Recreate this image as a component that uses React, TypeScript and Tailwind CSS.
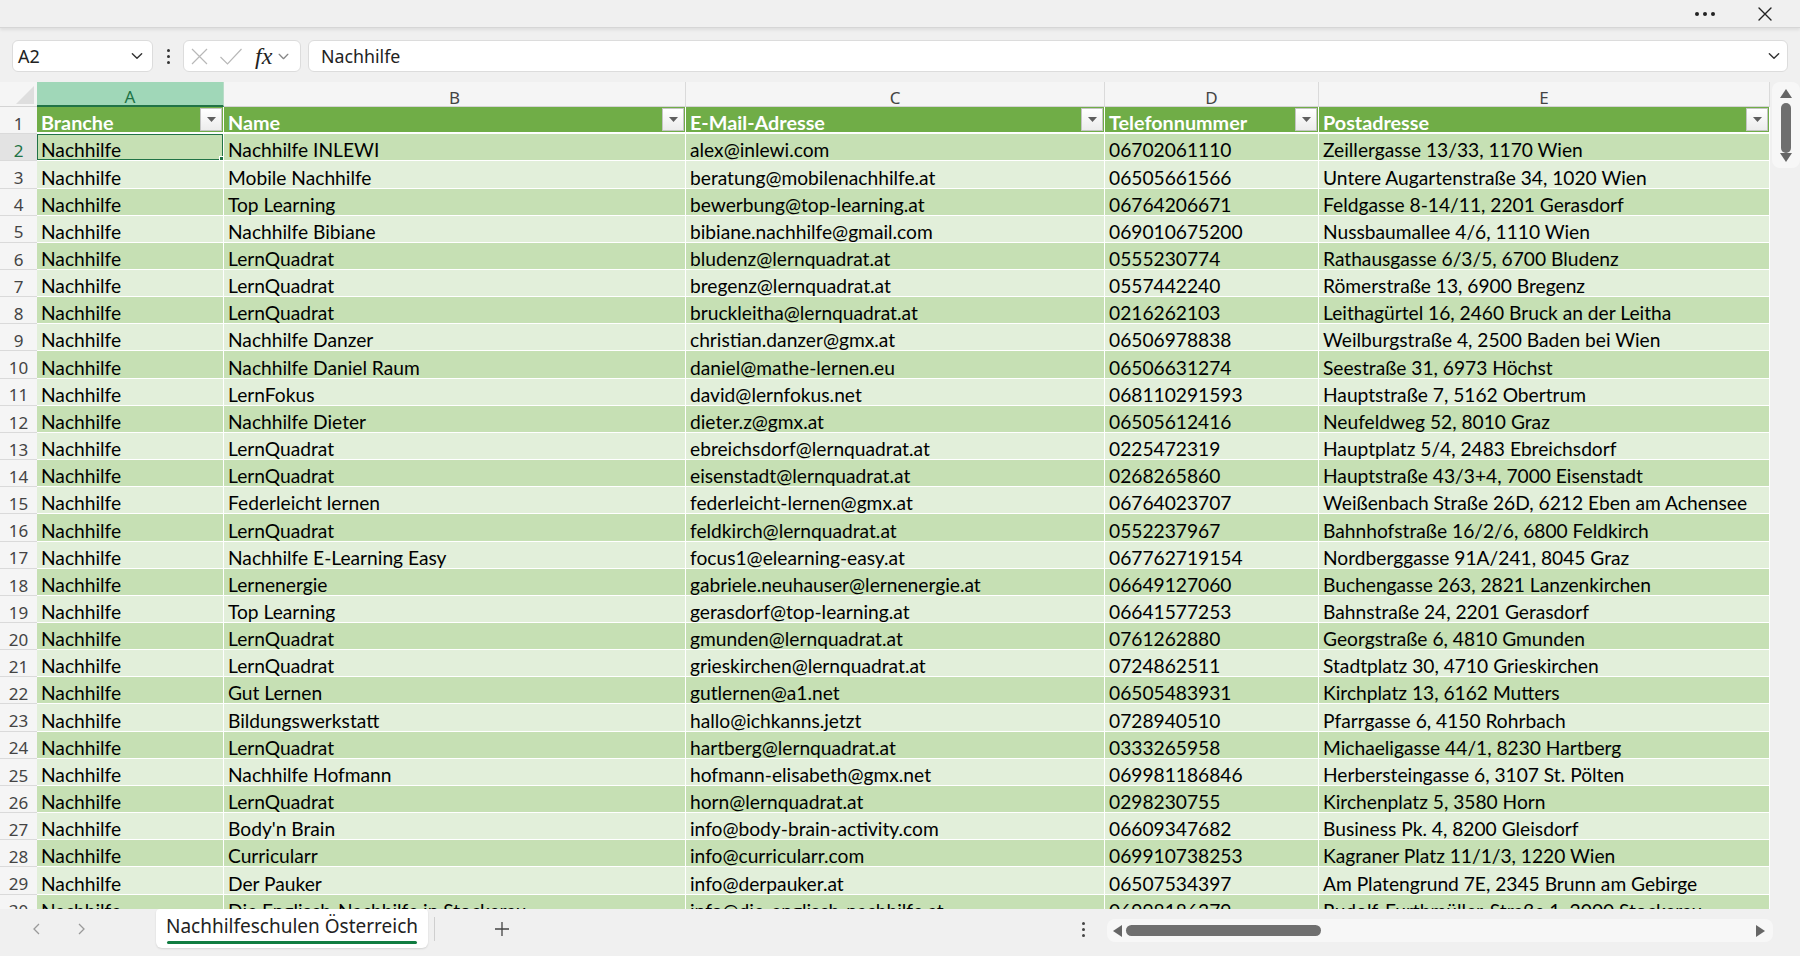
import React from "react";

type Row = [string, string, string, string, string];

const rows: Row[] = [
  ["Nachhilfe", "Nachhilfe INLEWI", "alex@inlewi.com", "06702061110", "Zeillergasse 13/33, 1170 Wien"],
  ["Nachhilfe", "Mobile Nachhilfe", "beratung@mobilenachhilfe.at", "06505661566", "Untere Augartenstraße 34, 1020 Wien"],
  ["Nachhilfe", "Top Learning", "bewerbung@top-learning.at", "06764206671", "Feldgasse 8-14/11, 2201 Gerasdorf"],
  ["Nachhilfe", "Nachhilfe Bibiane", "bibiane.nachhilfe@gmail.com", "069010675200", "Nussbaumallee 4/6, 1110 Wien"],
  ["Nachhilfe", "LernQuadrat", "bludenz@lernquadrat.at", "0555230774", "Rathausgasse 6/3/5, 6700 Bludenz"],
  ["Nachhilfe", "LernQuadrat", "bregenz@lernquadrat.at", "0557442240", "Römerstraße 13, 6900 Bregenz"],
  ["Nachhilfe", "LernQuadrat", "bruckleitha@lernquadrat.at", "0216262103", "Leithagürtel 16, 2460 Bruck an der Leitha"],
  ["Nachhilfe", "Nachhilfe Danzer", "christian.danzer@gmx.at", "06506978838", "Weilburgstraße 4, 2500 Baden bei Wien"],
  ["Nachhilfe", "Nachhilfe Daniel Raum", "daniel@mathe-lernen.eu", "06506631274", "Seestraße 31, 6973 Höchst"],
  ["Nachhilfe", "LernFokus", "david@lernfokus.net", "068110291593", "Hauptstraße 7, 5162 Obertrum"],
  ["Nachhilfe", "Nachhilfe Dieter", "dieter.z@gmx.at", "06505612416", "Neufeldweg 52, 8010 Graz"],
  ["Nachhilfe", "LernQuadrat", "ebreichsdorf@lernquadrat.at", "0225472319", "Hauptplatz 5/4, 2483 Ebreichsdorf"],
  ["Nachhilfe", "LernQuadrat", "eisenstadt@lernquadrat.at", "0268265860", "Hauptstraße 43/3+4, 7000 Eisenstadt"],
  ["Nachhilfe", "Federleicht lernen", "federleicht-lernen@gmx.at", "06764023707", "Weißenbach Straße 26D, 6212 Eben am Achensee"],
  ["Nachhilfe", "LernQuadrat", "feldkirch@lernquadrat.at", "0552237967", "Bahnhofstraße 16/2/6, 6800 Feldkirch"],
  ["Nachhilfe", "Nachhilfe E-Learning Easy", "focus1@elearning-easy.at", "067762719154", "Nordberggasse 91A/241, 8045 Graz"],
  ["Nachhilfe", "Lernenergie", "gabriele.neuhauser@lernenergie.at", "06649127060", "Buchengasse 263, 2821 Lanzenkirchen"],
  ["Nachhilfe", "Top Learning", "gerasdorf@top-learning.at", "06641577253", "Bahnstraße 24, 2201 Gerasdorf"],
  ["Nachhilfe", "LernQuadrat", "gmunden@lernquadrat.at", "0761262880", "Georgstraße 6, 4810 Gmunden"],
  ["Nachhilfe", "LernQuadrat", "grieskirchen@lernquadrat.at", "0724862511", "Stadtplatz 30, 4710 Grieskirchen"],
  ["Nachhilfe", "Gut Lernen", "gutlernen@a1.net", "06505483931", "Kirchplatz 13, 6162 Mutters"],
  ["Nachhilfe", "Bildungswerkstatt", "hallo@ichkanns.jetzt", "0728940510", "Pfarrgasse 6, 4150 Rohrbach"],
  ["Nachhilfe", "LernQuadrat", "hartberg@lernquadrat.at", "0333265958", "Michaeligasse 44/1, 8230 Hartberg"],
  ["Nachhilfe", "Nachhilfe Hofmann", "hofmann-elisabeth@gmx.net", "069981186846", "Herbersteingasse 6, 3107 St. Pölten"],
  ["Nachhilfe", "LernQuadrat", "horn@lernquadrat.at", "0298230755", "Kirchenplatz 5, 3580 Horn"],
  ["Nachhilfe", "Body'n Brain", "info@body-brain-activity.com", "06609347682", "Business Pk. 4, 8200 Gleisdorf"],
  ["Nachhilfe", "Curricularr", "info@curricularr.com", "069910738253", "Kagraner Platz 11/1/3, 1220 Wien"],
  ["Nachhilfe", "Der Pauker", "info@derpauker.at", "06507534397", "Am Platengrund 7E, 2345 Brunn am Gebirge"],
  ["Nachhilfe", "Die Englisch-Nachhilfe in Stockerau", "info@die-englisch-nachhilfe.at", "06998186379", "Rudolf-Furthmüller-Straße 1, 2000 Stockerau"],
];

const headers = ["Branche", "Name", "E-Mail-Adresse", "Telefonnummer", "Postadresse"];
const letters = ["A", "B", "C", "D", "E"];
const colW = ["w-[187px]", "w-[462px]", "w-[419px]", "w-[214px]", "w-[451px]"];

const cellFont = "font-['Lato','Liberation_Sans',sans-serif] text-[19.2px]";
const uiFont = "font-['Noto_Sans','Open_Sans',sans-serif]";

function FilterButton() {
  return (
    <div className="mr-[1px] flex h-[23px] w-[22px] shrink-0 items-center justify-center border border-[#c4c4c4] bg-gradient-to-b from-white to-[#ececec]">
      <svg width="9" height="5" viewBox="0 0 9 5">
        <path d="M0 0h9L4.5 5z" fill="#5f5f5f" />
      </svg>
    </div>
  );
}

function Chevron({ size = 12, color = "#333" }: { size?: number; color?: string }) {
  return (
    <svg width={size} height={size} viewBox="0 0 12 12" fill="none">
      <path d="M2 4l4 4 4-4" stroke={color} strokeWidth="1.2" strokeLinecap="round" strokeLinejoin="round" />
    </svg>
  );
}

function TitleBar() {
  return (
    <div className="flex h-[28px] shrink-0 items-center justify-end border-b border-[#d6d6d6] bg-[#f0f0f0] shadow-[0_2px_3px_rgba(0,0,0,0.08)]">
      <div className="mr-[42px] flex gap-[4px]">
        <span className="h-[4px] w-[4px] rounded-full bg-[#222]" />
        <span className="h-[4px] w-[4px] rounded-full bg-[#222]" />
        <span className="h-[4px] w-[4px] rounded-full bg-[#222]" />
      </div>
      <svg className="mr-[27px]" width="16" height="16" viewBox="0 0 16 16" fill="none">
        <path d="M2 2l12 12M14 2L2 14" stroke="#222" strokeWidth="1.4" strokeLinecap="round" />
      </svg>
    </div>
  );
}

function FormulaBar() {
  return (
    <div className={`mt-[12px] flex h-[32px] shrink-0 items-stretch pl-[12px] pr-[12px] ${uiFont}`}>
      <div className="flex w-[141px] items-center justify-between rounded-[6px] border border-[#dcdcdc] bg-white pl-[5px] pr-[8px]">
        <span className="text-[18px] text-[#222]">A2</span>
        <Chevron size={14} color="#333" />
      </div>
      <div className="flex w-[30px] flex-col items-center justify-center gap-[3px]">
        <span className="h-[3px] w-[3px] rounded-full bg-[#333]" />
        <span className="h-[3px] w-[3px] rounded-full bg-[#333]" />
        <span className="h-[3px] w-[3px] rounded-full bg-[#333]" />
      </div>
      <div className="flex w-[118px] items-center rounded-[6px] border border-[#dcdcdc] bg-white pl-[6px]">
        <svg width="19" height="19" viewBox="0 0 19 19" fill="none">
          <path d="M2 2l15 15M17 2L2 17" stroke="#b8b8b8" strokeWidth="1.2" />
        </svg>
        <svg className="ml-[10px]" width="24" height="19" viewBox="0 0 24 19" fill="none">
          <path d="M1.5 10l7 7L22.5 2" stroke="#b8b8b8" strokeWidth="1.2" />
        </svg>
        <span className="ml-[12px] font-['Liberation_Serif',serif] text-[24px] italic leading-none text-[#222]">fx</span>
        <span className="ml-[5px]">
          <Chevron size={13} color="#888" />
        </span>
      </div>
      <div className="ml-[7px] flex flex-1 items-center justify-between rounded-[6px] border border-[#dcdcdc] bg-white pl-[12px] pr-[6px]">
        <span className="text-[17.8px] text-[#222]">Nachhilfe</span>
        <Chevron size={14} color="#333" />
      </div>
    </div>
  );
}

function ColumnHeaders() {
  return (
    <div className={`flex h-[25px] shrink-0 ${uiFont}`}>
      <div className="relative w-[37px] shrink-0 border-b border-[#d4d4d4]">
        <svg className="absolute bottom-[2px] right-[3px]" width="18" height="18" viewBox="0 0 18 18">
          <path d="M18 0V18H0z" fill="#dedede" />
        </svg>
      </div>
      {letters.map((l, i) => (
        <div
          key={l}
          className={`${colW[i]} flex shrink-0 items-center justify-center border-r pt-[7px] text-[17px] ${
            i === 0
              ? "border-[#b9dcc8] border-b-2 border-b-[#217346] bg-[#a0d7b8] text-[#217346]"
              : "border-[#dadada] border-b border-b-[#d4d4d4] text-[#444]"
          }`}
        >
          {l}
        </div>
      ))}
    </div>
  );
}

function RowHeader({ n, selected }: { n: number; selected?: boolean }) {
  return (
    <div
      className={`flex w-[37px] shrink-0 items-center justify-center border-b border-[#dadada] pt-[7px] text-[17px] ${uiFont} ${
        selected ? "bg-[#e3e3e3] text-[#217346]" : "text-[#444]"
      }`}
    >
      {n}
    </div>
  );
}

function HeaderRow() {
  return (
    <div className="flex h-[27.2px] shrink-0">
      <RowHeader n={1} />
      {headers.map((h, i) => (
        <div
          key={h}
          className={`${colW[i]} flex shrink-0 items-center justify-between border-b-2 border-r border-white bg-[#70ad47] pl-[4px] font-['Lato','Liberation_Sans',sans-serif] text-[19.8px] font-bold text-white`}
        >
          <span className="self-end leading-[19px]">{h}</span>
          <FilterButton />
        </div>
      ))}
    </div>
  );
}

function DataRow({ row, n }: { row: Row; n: number }) {
  const bg = n % 2 === 0 ? "bg-[#c6e0b4]" : "bg-[#e2efda]";
  return (
    <div className="flex h-[27.17px] shrink-0">
      <RowHeader n={n} selected={n === 2} />
      {row.map((v, i) => (
        <div
          key={i}
          className={`${colW[i]} relative flex shrink-0 items-end overflow-hidden whitespace-nowrap border-b border-r border-white pl-[4px] leading-[20px] ${bg} ${cellFont} text-black`}
        >
          {v}
          {n === 2 && i === 0 && (
            <>
              <div className="pointer-events-none absolute inset-[-1px] border-2 border-[#217346]" />
              <div className="absolute bottom-[-3px] right-[-3px] h-[7px] w-[7px] border border-white bg-[#217346]" />
            </>
          )}
        </div>
      ))}
    </div>
  );
}

function VerticalScrollbar() {
  return (
    <div className="flex w-[28px] shrink-0 flex-col items-center rounded-[8px] bg-[#f7f7f7] pt-[7px] pb-[6px]">
      <svg width="12" height="9" viewBox="0 0 12 9">
        <path d="M6 0L12 9H0z" fill="#666" />
      </svg>
      <div className="mt-[5px] h-[50px] w-[10px] rounded-full bg-[#6f6f6f]" />
      <div className="flex-1" />
      <svg width="12" height="9" viewBox="0 0 12 9">
        <path d="M0 0H12L6 9z" fill="#666" />
      </svg>
    </div>
  );
}

function SheetTabs() {
  return (
    <div className={`flex h-[46px] shrink-0 items-start bg-[#f0f0f0] ${uiFont}`}>
      <div className="flex h-[40px] w-[156px] items-center gap-[30px] pl-[30px]">
        <svg width="14" height="14" viewBox="0 0 14 14" fill="none">
          <path d="M9 2L4 7l5 5" stroke="#9a9a9a" strokeWidth="1.3" />
        </svg>
        <svg width="14" height="14" viewBox="0 0 14 14" fill="none">
          <path d="M5 2l5 5-5 5" stroke="#9a9a9a" strokeWidth="1.3" />
        </svg>
      </div>
      <div className="relative flex h-[39px] w-[272px] items-center justify-center rounded-b-[6px] rounded-t-[4px] bg-white shadow-[0_1px_2px_rgba(0,0,0,0.12)]">
        <span className="pb-[4px] text-[19px] text-[#222]">Nachhilfeschulen Österreich</span>
        <div className="absolute bottom-[4px] left-[11px] right-[11px] h-[3px] rounded-full bg-[#107c41]" />
      </div>
      <div className="ml-[6px] mt-[8px] h-[24px] w-px bg-[#cfcfcf]" />
      <div className="flex h-[40px] w-[134px] items-center justify-center">
        <svg width="16" height="16" viewBox="0 0 16 16" fill="none">
          <path d="M8 1v14M1 8h14" stroke="#444" strokeWidth="1.3" />
        </svg>
      </div>
      <div className="flex-1" />
      <div className="flex h-[40px] w-[30px] flex-col items-center justify-center gap-[3px]">
        <span className="h-[3px] w-[3px] rounded-full bg-[#444]" />
        <span className="h-[3px] w-[3px] rounded-full bg-[#444]" />
        <span className="h-[3px] w-[3px] rounded-full bg-[#444]" />
      </div>
      <div className="ml-[9px] mt-[10px] flex h-[23px] w-[666px] items-center rounded-[8px] bg-[#f7f7f7] pl-[6px] pr-[8px]">
        <svg width="9" height="12" viewBox="0 0 9 12">
          <path d="M0 6L9 0V12z" fill="#666" />
        </svg>
        <div className="ml-[4px] h-[11px] w-[195px] rounded-full bg-[#6f6f6f]" />
        <div className="flex-1" />
        <svg width="9" height="12" viewBox="0 0 9 12">
          <path d="M9 6L0 0V12z" fill="#666" />
        </svg>
      </div>
      <div className="w-[27px]" />
    </div>
  );
}

export default function App() {
  return (
    <div className="flex h-[956px] w-[1800px] flex-col overflow-hidden bg-[#f0f0f0]">
      <TitleBar />
      <FormulaBar />
      <div className="mt-[10px] flex h-[827px] shrink-0">
        <div className="flex w-[1770px] shrink-0 flex-col overflow-hidden bg-[#f5f5f5]">
          <ColumnHeaders />
          <HeaderRow />
          {rows.map((r, i) => (
            <DataRow key={i} row={r} n={i + 2} />
          ))}
        </div>
        <div className="ml-[2px]">
          <VerticalScrollbar />
        </div>
      </div>
      <SheetTabs />
    </div>
  );
}
